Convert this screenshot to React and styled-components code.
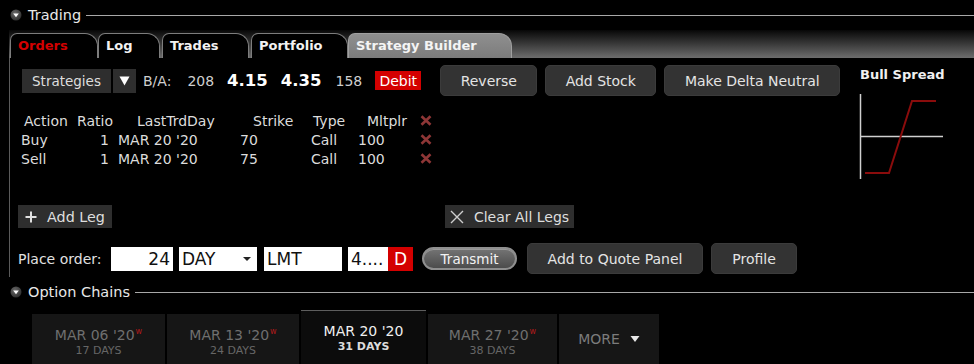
import React from 'react';
import styled, { createGlobalStyle } from 'styled-components';

const GlobalStyle = createGlobalStyle`
  html, body {
    margin: 0;
    padding: 0;
    background: #000;
  }
  body {
    font-family: "DejaVu Sans", Verdana, sans-serif;
    color: #ddd;
  }
`;

const Screen = styled.div`
  width: 974px;
  height: 364px;
  overflow: hidden;
  background: #000;
  display: flex;
  flex-direction: column;
`;

const SectionHeader = styled.div`
  height: 30px;
  flex-shrink: 0;
  display: flex;
  align-items: center;
  padding-left: 10px;
`;

const SectionTitle = styled.span`
  font-size: 14.5px;
  color: #e8e8e8;
  margin-left: 6px;
  white-space: nowrap;
`;

const Rule = styled.div`
  flex: 1;
  height: 1px;
  background: #a8a8a8;
  margin-left: 5px;
`;

const TabStrip = styled.div`
  margin-left: 9px;
  height: 28px;
  flex-shrink: 0;
  display: flex;
  align-items: flex-end;
  background: linear-gradient(#070707, #6d6d6d);
`;

const Tab = styled.div`
  box-sizing: border-box;
  width: ${p => p.$w}px;
  height: 25px;
  margin-left: ${p => p.$ml}px;
  padding: 4px 0 0 7px;
  border: 1px solid ${p => (p.$active ? '#a0a0a0' : '#7d7d7d')};
  border-bottom: none;
  border-radius: 7px 13px 0 0;
  background: ${p => (p.$active ? 'linear-gradient(#8f8f8f, #7c7c7c)' : '#000')};
  color: ${p => p.$color};
  font-size: 13px;
  font-weight: bold;
  white-space: nowrap;
`;

const Panel = styled.div`
  box-sizing: border-box;
  margin-left: 9px;
  height: 219px;
  flex-shrink: 0;
  border-left: 1px solid #5a5a5a;
  padding-left: 8px;
  display: flex;
  flex-direction: column;
`;

const TopArea = styled.div`
  display: flex;
`;

const LeftCol = styled.div`
  width: 837px;
  display: flex;
  flex-direction: column;
`;

const ControlRow = styled.div`
  margin-top: 7px;
  height: 31px;
  display: flex;
  align-items: center;
`;

const FlatButton = styled.div`
  box-sizing: border-box;
  width: ${p => p.$w}px;
  height: ${p => p.$h}px;
  margin-left: ${p => p.$ml || 0}px;
  background: #2e2e2e;
  color: #dedede;
  font-size: ${p => p.$fs || 14}px;
  display: flex;
  align-items: center;
  justify-content: center;
  gap: ${p => p.$gap || 0}px;
  white-space: nowrap;
`;

const QuoteText = styled.span`
  margin-left: ${p => p.$ml}px;
  font-size: ${p => (p.$big ? 16.5 : 14)}px;
  font-weight: ${p => (p.$big ? 'bold' : 'normal')};
  color: ${p => (p.$big ? '#fff' : '#cfcfcf')};
  white-space: nowrap;
`;

const DebitBadge = styled.span`
  margin-left: 13px;
  width: 46px;
  height: 19px;
  background: #d40000;
  color: #fff;
  font-size: 14px;
  display: flex;
  align-items: center;
  justify-content: center;
`;

const RoundButton = styled.div`
  box-sizing: border-box;
  width: ${p => p.$w}px;
  height: 31px;
  margin-left: ${p => p.$ml}px;
  background: #333;
  border: 1px solid #3b3b3b;
  border-radius: 5px;
  color: #e4e4e4;
  font-size: 14px;
  display: flex;
  align-items: center;
  justify-content: center;
  white-space: nowrap;
`;

const LegTable = styled.div`
  margin-top: 15px;
  display: grid;
  grid-template-columns: 54px 42px 118px 68px 55px 57px 28px;
  grid-auto-rows: 19px;
  font-size: 14px;
  color: #dcdcdc;
`;

const Cell = styled.div`
  display: flex;
  align-items: center;
  justify-content: ${p => (p.$right ? 'flex-end' : 'flex-start')};
  padding-left: ${p => p.$pl || 0}px;
  padding-right: ${p => p.$pr || 0}px;
  white-space: nowrap;
`;

const LegActions = styled.div`
  margin-top: 37px;
  height: 23px;
  display: flex;
`;

const ChartCol = styled.div`
  display: flex;
  flex-direction: column;
  padding-top: 9px;
`;

const ChartTitle = styled.div`
  margin-left: 5px;
  font-size: 13px;
  font-weight: bold;
  color: #f0f0f0;
  line-height: 15px;
  white-space: nowrap;
`;

const ChartSvg = styled.svg`
  margin-top: 9px;
  display: block;
`;

const OrderRow = styled.div`
  margin-top: 15px;
  height: 31px;
  display: flex;
  align-items: center;
`;

const OrderLabel = styled.span`
  font-size: 14px;
  color: #e0e0e0;
  width: 93px;
  white-space: nowrap;
`;

const Field = styled.div`
  box-sizing: border-box;
  width: ${p => p.$w}px;
  height: 24px;
  margin-left: ${p => p.$ml}px;
  background: ${p => (p.$red ? '#d40000' : '#fff')};
  color: ${p => (p.$red ? '#fff' : '#111')};
  font-size: 17px;
  padding: 0 3px;
  display: flex;
  align-items: center;
  justify-content: ${p => (p.$right ? 'flex-end' : p.$red ? 'center' : 'space-between')};
  white-space: nowrap;
  overflow: hidden;
`;

const Caret = styled.span`
  width: 0;
  height: 0;
  margin-right: 3px;
  border-left: 4px solid transparent;
  border-right: 4px solid transparent;
  border-top: 4px solid #222;
`;

const TransmitPill = styled.div`
  box-sizing: border-box;
  margin-left: 9px;
  width: 95px;
  height: 23px;
  border-radius: 12px;
  border: 2px solid #8f8f8f;
  background: linear-gradient(#747474, #4c4c4c);
  box-shadow: inset 0 1px 0 #9a9a9a;
  color: #f2f2f2;
  font-size: 13.5px;
  display: flex;
  align-items: center;
  justify-content: center;
`;

const DateRow = styled.div`
  margin-left: 32px;
  display: flex;
  gap: 2px;
  flex-shrink: 0;
`;

const DateTab = styled.div`
  box-sizing: border-box;
  width: ${p => p.$w}px;
  height: 60px;
  margin-top: ${p => (p.$active ? 3 : 7)}px;
  padding-top: ${p => (p.$active ? 12 : 9)}px;
  background: ${p => (p.$active ? '#0c0c0c' : '#161616')};
  border-top: ${p => (p.$active ? '1px solid #5e5e5e' : 'none')};
  display: flex;
  flex-direction: column;
  align-items: center;
`;

const DateLabel = styled.div`
  font-size: 14px;
  line-height: 17px;
  color: ${p => (p.$active ? '#f0f0f0' : '#6f6f6f')};
  white-space: nowrap;
`;

const Weekly = styled.sup`
  font-size: 8px;
  color: #b21a1a;
  vertical-align: 6px;
  margin-left: 1px;
`;

const DaysLabel = styled.div`
  font-size: 11px;
  line-height: 14px;
  color: ${p => (p.$active ? '#dcdcdc' : '#666')};
  font-weight: ${p => (p.$active ? 'bold' : 'normal')};
`;

const MoreTab = styled.div`
  width: 100px;
  height: 60px;
  margin-top: 7px;
  padding-top: 9px;
  box-sizing: border-box;
  background: #161616;
  color: #7c7c7c;
  font-size: 14px;
  display: flex;
  justify-content: center;
  gap: 10px;
  line-height: 32px;
`;

const CollapseIcon = () => (
  <svg width="12" height="12" viewBox="0 0 12 12">
    <defs>
      <radialGradient id="cg" cx="0.4" cy="0.35" r="0.7">
        <stop offset="0" stopColor="#6a6a6a" />
        <stop offset="1" stopColor="#2c2c2c" />
      </radialGradient>
    </defs>
    <circle cx="6" cy="6" r="5.5" fill="url(#cg)" />
    <polygon points="3.2,4.6 8.8,4.6 6,8.2" fill="#fff" />
  </svg>
);

const RemoveIcon = () => (
  <svg width="12" height="11" viewBox="0 0 12 11">
    <path d="M1.5 1.2 L10.5 9.8 M10.5 1.2 L1.5 9.8" stroke="#8e3636" strokeWidth="2.6" />
  </svg>
);

const legs = [
  { action: 'Buy', ratio: '1', day: "MAR 20 '20", strike: '70', type: 'Call', mult: '100' },
  { action: 'Sell', ratio: '1', day: "MAR 20 '20", strike: '75', type: 'Call', mult: '100' },
];

const expiries = [
  { date: "MAR 06 '20", days: '17 DAYS', weekly: true, w: 133 },
  { date: "MAR 13 '20", days: '24 DAYS', weekly: true, w: 132 },
  { date: "MAR 20 '20", days: '31 DAYS', active: true, w: 125 },
  { date: "MAR 27 '20", days: '38 DAYS', weekly: true, w: 129 },
];

const tabs = [
  { label: 'Orders', w: 88, ml: 1, color: '#d40000' },
  { label: 'Log', w: 62, ml: 0, color: '#f2f2f2' },
  { label: 'Trades', w: 87, ml: 2, color: '#f2f2f2' },
  { label: 'Portfolio', w: 97, ml: 2, color: '#f2f2f2' },
  { label: 'Strategy Builder', w: 164, ml: 0, color: '#f4f4f4', active: true },
];

export default function App() {
  return (
    <Screen>
      <GlobalStyle />
      <SectionHeader>
        <CollapseIcon />
        <SectionTitle>Trading</SectionTitle>
        <Rule />
      </SectionHeader>

      <TabStrip>
        {tabs.map(t => (
          <Tab key={t.label} $w={t.w} $ml={t.ml} $color={t.color} $active={t.active}>
            {t.label}
          </Tab>
        ))}
      </TabStrip>

      <Panel>
        <TopArea>
          <LeftCol>
            <ControlRow>
              <FlatButton $w={89} $h={24} $ml={4} $fs={13.5}>Strategies</FlatButton>
              <FlatButton $w={23} $h={24} $ml={2}>
                <svg width="11" height="10" viewBox="0 0 11 10">
                  <polygon points="0.5,0.5 10.5,0.5 5.5,9.5" fill="#fff" />
                </svg>
              </FlatButton>
              <QuoteText $ml={7}>B/A:</QuoteText>
              <QuoteText $ml={16}>208</QuoteText>
              <QuoteText $ml={13} $big>4.15</QuoteText>
              <QuoteText $ml={13} $big>4.35</QuoteText>
              <QuoteText $ml={14}>158</QuoteText>
              <DebitBadge>Debit</DebitBadge>
              <RoundButton $w={97} $ml={19}>Reverse</RoundButton>
              <RoundButton $w={111} $ml={8}>Add Stock</RoundButton>
              <RoundButton $w={176} $ml={8}>Make Delta Neutral</RoundButton>
            </ControlRow>

            <LegTable>
              <Cell $pl={6}>Action</Cell>
              <Cell $pl={5}>Ratio</Cell>
              <Cell $pl={23}>LastTrdDay</Cell>
              <Cell $pl={21}>Strike</Cell>
              <Cell $pl={13}>Type</Cell>
              <Cell $pl={12}>Mltplr</Cell>
              <Cell $pl={8}><RemoveIcon /></Cell>
              {legs.map(l => (
                <React.Fragment key={l.action}>
                  <Cell $pl={3}>{l.action}</Cell>
                  <Cell $right $pr={5}>{l.ratio}</Cell>
                  <Cell $pl={4}>{l.day}</Cell>
                  <Cell $pl={8}>{l.strike}</Cell>
                  <Cell $pl={11}>{l.type}</Cell>
                  <Cell $pl={3}>{l.mult}</Cell>
                  <Cell $pl={8}><RemoveIcon /></Cell>
                </React.Fragment>
              ))}
            </LegTable>

            <LegActions>
              <FlatButton $w={94} $h={23} $gap={10} $fs={14.3}>
                <svg width="12" height="12" viewBox="0 0 12 12">
                  <path d="M6 0.5 V11.5 M0.5 6 H11.5" stroke="#e0e0e0" strokeWidth="2" />
                </svg>
                <span>Add Leg</span>
              </FlatButton>
              <FlatButton $w={129} $h={23} $ml={333} $gap={10} $fs={14}>
                <svg width="14" height="14" viewBox="0 0 14 14">
                  <path d="M1 1 L13 13 M13 1 L1 13" stroke="#cfcfcf" strokeWidth="1.4" />
                </svg>
                <span>Clear All Legs</span>
              </FlatButton>
            </LegActions>
          </LeftCol>

          <ChartCol>
            <ChartTitle>Bull Spread</ChartTitle>
            <ChartSvg width="95" height="92" viewBox="0 0 95 92">
              <line x1="5.5" y1="3" x2="5.5" y2="88" stroke="#d0d0d0" strokeWidth="1.5" />
              <line x1="5" y1="45.5" x2="88" y2="45.5" stroke="#d0d0d0" strokeWidth="1.5" />
              <polyline
                points="10,82 34,82 57,10 81,10"
                fill="none"
                stroke="#8a0c0c"
                strokeWidth="2"
              />
            </ChartSvg>
          </ChartCol>
        </TopArea>

        <OrderRow>
          <OrderLabel>Place order:</OrderLabel>
          <Field $w={62} $ml={0} $right>24</Field>
          <Field $w={78} $ml={6}>
            <span>DAY</span>
            <Caret />
          </Field>
          <Field $w={78} $ml={7}>LMT</Field>
          <Field $w={40} $ml={6}>4....</Field>
          <Field $w={25} $ml={0} $red>D</Field>
          <TransmitPill>Transmit</TransmitPill>
          <RoundButton $w={176} $ml={10}>Add to Quote Panel</RoundButton>
          <RoundButton $w={86} $ml={8}>Profile</RoundButton>
        </OrderRow>
      </Panel>

      <SectionHeader>
        <CollapseIcon />
        <SectionTitle>Option Chains</SectionTitle>
        <Rule />
      </SectionHeader>

      <DateRow>
        {expiries.map(e => (
          <DateTab key={e.date} $w={e.w} $active={e.active}>
            <DateLabel $active={e.active}>
              {e.date}
              {e.weekly && <Weekly>w</Weekly>}
            </DateLabel>
            <DaysLabel $active={e.active}>{e.days}</DaysLabel>
          </DateTab>
        ))}
        <MoreTab>
          <span>MORE</span>
          <svg width="10" height="32" viewBox="0 0 10 32">
            <polygon points="0.5,13 9.5,13 5,19" fill="#e8e8e8" />
          </svg>
        </MoreTab>
      </DateRow>
    </Screen>
  );
}
